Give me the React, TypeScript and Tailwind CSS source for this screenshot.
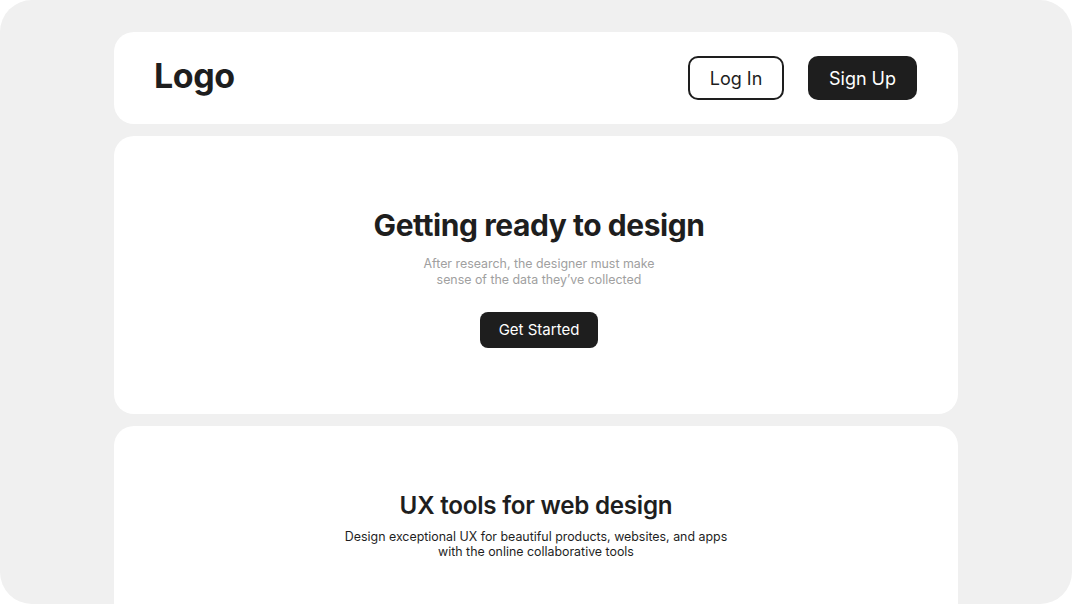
export default function App() {
  return (
    <div className="w-[1072px] h-[604px] bg-white" style={{ fontFamily: "Inter, 'Noto Sans', sans-serif" }}>
      <div className="w-full h-full rounded-[32px] bg-[#f0f0f0] overflow-hidden flex flex-col items-center pt-8 gap-3">
        <header className="w-[844px] h-[92px] shrink-0 bg-white rounded-[20px] pl-10 pr-[41px] flex items-center justify-between">
          <div className="text-[34px] font-bold tracking-[-0.012em] text-[#1e1e1e] leading-none mb-[5px]">Logo</div>
          <div className="flex items-center gap-6">
            <button className="w-[96px] h-[44px] rounded-[10px] border-2 border-[#1e1e1e] text-[18px] text-[#1e1e1e] flex items-center justify-center">Log In</button>
            <button className="w-[109px] h-[44px] rounded-[10px] bg-[#1e1e1e] text-[18px] text-white flex items-center justify-center">Sign Up</button>
          </div>
        </header>
        <section className="w-[844px] h-[278px] shrink-0 bg-white rounded-[20px] flex flex-col items-center pt-[71px] pl-[6px]">
          <h1 className="text-[30px] leading-[36px] font-bold tracking-[-0.015em] text-[#1e1e1e]">Getting ready to design</h1>
          <p className="mt-[13px] text-[12.4px] leading-4 text-[#a0a0a0] text-center">After research, the designer must make<br />sense of the data they’ve collected</p>
          <button className="mt-[24px] w-[118px] h-[36px] rounded-[8px] bg-[#1e1e1e] text-white text-[15px] flex items-center justify-center">Get Started</button>
        </section>
        <section className="w-[844px] h-[300px] shrink-0 bg-white rounded-[20px] flex flex-col items-center pt-[65px]">
          <h2 className="text-[24.2px] leading-[30px] font-semibold tracking-[-0.01em] text-[#1e1e1e]">UX tools for web design</h2>
          <p className="mt-[8px] text-[12.4px] leading-[15px] text-[#1e1e1e] text-center">Design exceptional UX for beautiful products, websites, and apps<br />with the online collaborative tools</p>
        </section>
      </div>
    </div>
  );
}
